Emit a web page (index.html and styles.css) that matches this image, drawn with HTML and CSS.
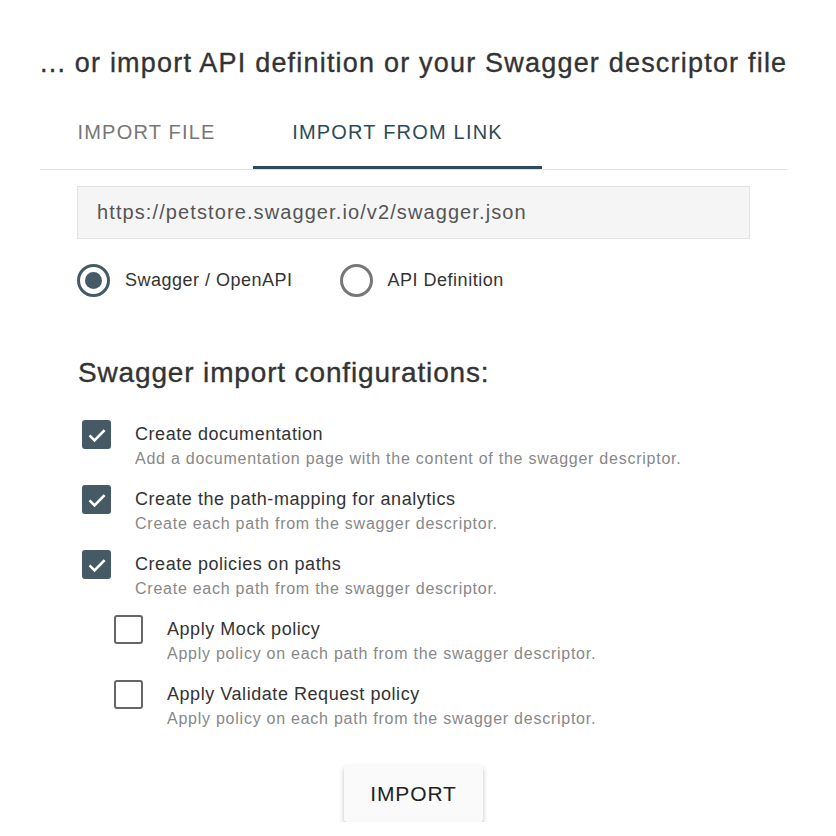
FILE: index.html
```html
<!DOCTYPE html>
<html>
<head>
<meta charset="utf-8">
<link rel="stylesheet" href="styles.css">
</head>
<body>
<div class="page">
  <h1 class="title">... or import API definition or your Swagger descriptor file</h1>
  <div class="tabs">
    <div class="tab">IMPORT FILE</div>
    <div class="tab active">IMPORT FROM LINK</div>
  </div>
  <div class="content">
    <div class="input">https://petstore.swagger.io/v2/swagger.json</div>
    <div class="radios">
      <div class="radio checked"><span class="circle"></span><span class="rlabel">Swagger / OpenAPI</span></div>
      <div class="radio"><span class="circle"></span><span class="rlabel">API Definition</span></div>
    </div>
    <h2 class="subtitle">Swagger import configurations:</h2>
    <div class="options">
      <div class="opt">
        <span class="box checked"><svg viewBox="0 0 24 24"><path d="M4.6 12.4l4.9 4.9L19.6 7.2" fill="none" stroke="#fff" stroke-width="2.6"/></svg></span>
        <div class="otext"><div class="olabel">Create documentation</div><div class="odesc">Add a documentation page with the content of the swagger descriptor.</div></div>
      </div>
      <div class="opt">
        <span class="box checked"><svg viewBox="0 0 24 24"><path d="M4.6 12.4l4.9 4.9L19.6 7.2" fill="none" stroke="#fff" stroke-width="2.6"/></svg></span>
        <div class="otext"><div class="olabel">Create the path-mapping for analytics</div><div class="odesc">Create each path from the swagger descriptor.</div></div>
      </div>
      <div class="opt">
        <span class="box checked"><svg viewBox="0 0 24 24"><path d="M4.6 12.4l4.9 4.9L19.6 7.2" fill="none" stroke="#fff" stroke-width="2.6"/></svg></span>
        <div class="otext"><div class="olabel">Create policies on paths</div><div class="odesc">Create each path from the swagger descriptor.</div></div>
      </div>
      <div class="opt nested">
        <span class="box"></span>
        <div class="otext"><div class="olabel">Apply Mock policy</div><div class="odesc">Apply policy on each path from the swagger descriptor.</div></div>
      </div>
      <div class="opt nested">
        <span class="box"></span>
        <div class="otext"><div class="olabel">Apply Validate Request policy</div><div class="odesc">Apply policy on each path from the swagger descriptor.</div></div>
      </div>
    </div>
    <div class="actions"><button class="btn">IMPORT</button></div>
  </div>
</div>
</body>
</html>
```
FILE: styles.css
```css
* { box-sizing: border-box; }
body {
  margin: 0;
  background: #fff;
  font-family: "Liberation Sans", Arial, sans-serif;
  color: #333;
}
.page {
  padding: 47px 49px 0 40px;
}
.title {
  margin: 0;
  font-size: 27px;
  font-weight: normal;
  color: #333;
  line-height: 32px;
  letter-spacing: 1.2px;
  white-space: nowrap;
  -webkit-text-stroke: 0.35px #333;
}
.tabs {
  display: flex;
  margin-top: 21px;
  border-bottom: 1px solid #e0e0e0;
}
.tab {
  width: 213px;
  height: 69px;
  display: flex;
  align-items: center;
  justify-content: center;
  font-size: 20px;
  letter-spacing: 1.2px;
  color: #777;
  padding-bottom: 5px;
}
.tab.active {
  width: 289px;
  color: #2d4a58;
  border-bottom: 3px solid #2d4a58;
  padding-bottom: 2px;
}
.content {
  padding: 16px 0 0 37px;
}
.input {
  width: 673px;
  height: 53px;
  background: #f5f5f5;
  border: 1px solid #e2e2e2;
  padding: 0 19px;
  display: flex;
  align-items: center;
  font-size: 20px;
  letter-spacing: 1.1px;
  color: #555;
}
.radios {
  display: flex;
  margin-top: 25px;
  gap: 47px;
}
.radio {
  display: flex;
  align-items: center;
  gap: 15px;
  font-size: 18px;
  letter-spacing: 0.5px;
  color: #333;
}
.circle {
  width: 33px;
  height: 33px;
  border-radius: 50%;
  border: 3px solid #777;
  display: flex;
  align-items: center;
  justify-content: center;
}
.radio.checked .circle {
  border-color: #455a64;
}
.radio.checked .circle::after {
  content: "";
  width: 17px;
  height: 17px;
  border-radius: 50%;
  background: #455a64;
}
.subtitle {
  margin: 59px 0 0 1px;
  font-size: 28px;
  font-weight: normal;
  line-height: 34px;
  letter-spacing: 0.85px;
  color: #333;
  -webkit-text-stroke: 0.35px #333;
}
.options {
  margin-top: 29px;
  display: flex;
  flex-direction: column;
  gap: 15px;
}
.opt {
  display: flex;
  align-items: flex-start;
  padding-left: 5px;
  gap: 24px;
  height: 50px;
}
.opt.nested {
  padding-left: 37px;
}
.box {
  width: 29px;
  height: 29px;
  border-radius: 3px;
  border: 2.5px solid #666;
  margin-top: 1px;
  display: flex;
  align-items: center;
  justify-content: center;
  flex: none;
}
.box.checked {
  background: #455a64;
  border-color: #455a64;
}
.box svg {
  width: 24px;
  height: 24px;
  flex: none;
}
.olabel {
  font-size: 18px;
  line-height: 26px;
  letter-spacing: 0.55px;
  color: #333;
  margin-top: 2px;
}
.odesc {
  font-size: 16px;
  line-height: 24px;
  letter-spacing: 0.75px;
  color: #888;
}
.actions {
  display: flex;
  justify-content: center;
  width: 673px;
  margin-top: 36px;
}
.btn {
  width: 139px;
  height: 57px;
  border: none;
  border-radius: 3px;
  background: #fafafa;
  font-family: "Liberation Sans", Arial, sans-serif;
  font-size: 21px;
  letter-spacing: 0.9px;
  color: #222;
  box-shadow: 0 3px 5px rgba(0,0,0,0.25);
}
```
